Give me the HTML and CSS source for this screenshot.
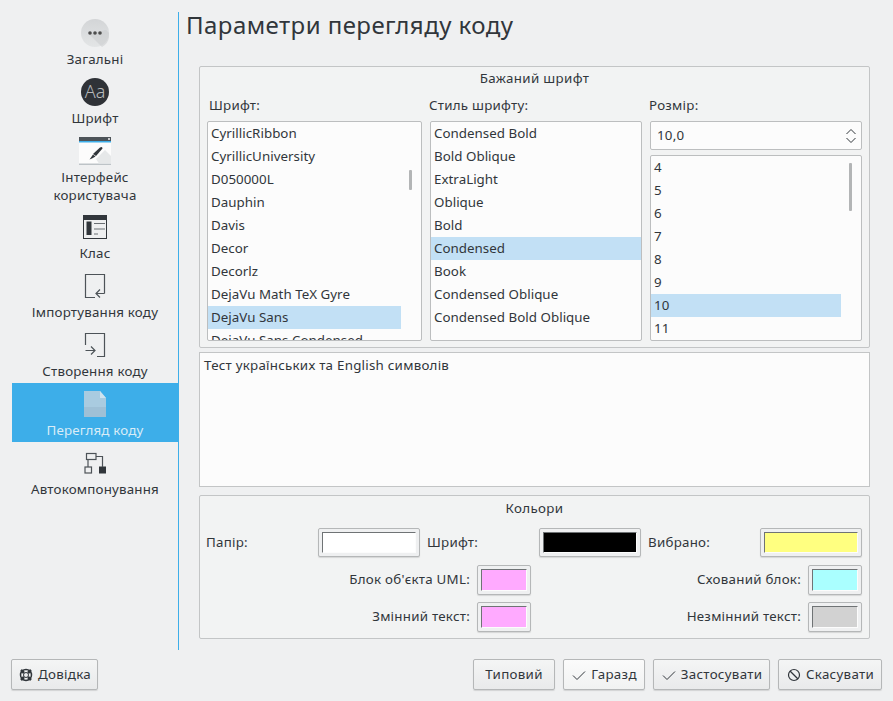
FILE: index.html
```html
<!DOCTYPE html>
<html lang="uk">
<head>
<meta charset="utf-8">
<title>Параметри перегляду коду</title>
<link rel="stylesheet" href="styles.css">
</head>
<body>
<div class="window">
  <div class="top">
    <nav class="sidebar">
      <div class="nav-item">
        <svg class="icon" width="28" height="28" viewBox="0 0 28 28"><defs><linearGradient id="g1" x1="0" y1="0" x2="0" y2="1"><stop offset="0" stop-color="#d3d5d7"/><stop offset="1" stop-color="#e3e5e6"/></linearGradient></defs><circle cx="14" cy="14" r="14" fill="url(#g1)"/><path d="M8 15l13 13a14 14 0 0 0 7-14l-3-3z" fill="#c8cacc" opacity=".5"/><circle cx="9" cy="14" r="1.800" fill="#4d4d4d"/><circle cx="14" cy="14" r="1.800" fill="#4d4d4d"/><circle cx="19" cy="14" r="1.800" fill="#4d4d4d"/></svg>
        <span>Загальні</span>
      </div>
      <div class="nav-item">
        <svg class="icon" width="28" height="28" viewBox="0 0 28 28"><circle cx="14" cy="14" r="14" fill="#2f3237"/><text x="14" y="20" text-anchor="middle" class="aa">Aa</text></svg>
        <span>Шрифт</span>
      </div>
      <div class="nav-item nav-tall">
        <svg class="icon" width="32" height="28" viewBox="0 0 32 28"><rect width="32" height="28" fill="#fcfcfc"/><rect width="32" height="4" fill="#4d5358"/><rect y="4" width="32" height="1.500" fill="#3daee9"/><rect x="29" y="1" width="2" height="2" fill="#c8cacc"/><rect y="26.500" width="32" height="1.500" fill="#bdc3c7"/><path d="M17 22l9-9 6 6v7.500H20z" fill="#e6e8e9"/><path d="M14 17l7-6.500q2.500-1.500 2.500 1L17 19z" fill="#31363b"/><path d="M14 17.500l2.500 2-3.500 2-2.500 1z" fill="#31363b"/></svg>
        <span>Інтерфейс<br>користувача</span>
      </div>
      <div class="nav-item">
        <svg class="icon" width="24" height="24" viewBox="0 0 24 24"><rect x=".5" y=".5" width="23" height="23" fill="#eff0f1" stroke="#31363b"/><rect width="24" height="5" fill="#31363b"/><rect x="3.500" y="6.500" width="5" height="13.500" fill="#31363b"/><path d="M11 8.500h11M11 14h11M11 19h4" stroke="#6b7074" fill="none"/></svg>
        <span>Клас</span>
      </div>
      <div class="nav-item">
        <svg class="icon" width="24" height="24" viewBox="0 0 24 24"><path d="M21.500 19.500V.5H2.500v23H12M21.500 19.500H13M17 15.500l-4 4 4 4" fill="none" stroke="#4d5358" stroke-width="1.200"/></svg>
        <span>Імпортування коду</span>
      </div>
      <div class="nav-item">
        <svg class="icon" width="24" height="24" viewBox="0 0 24 24"><path d="M2.500 12V.5h19v23H14M2.500 17.500H12M8 13.500l4 4-4 4" fill="none" stroke="#4d5358" stroke-width="1.200"/></svg>
        <span>Створення коду</span>
      </div>
      <div class="nav-item selected">
        <svg class="icon" width="24" height="28" viewBox="0 0 24 28"><path d="M1 1h16l6 7v19H1z" fill="#a9cbe0"/><path d="M1 17h22v10H1z" fill="#9fc0d6"/><path d="M17 1l6 7h-6z" fill="#cfe3ef"/></svg>
        <span>Перегляд коду</span>
      </div>
      <div class="nav-item">
        <svg class="icon" width="24" height="24" viewBox="0 0 24 24"><rect x="3.500" y="2.500" width="9.500" height="6" fill="none" stroke="#4d5358" stroke-width="1.200"/><rect x="2" y="16" width="6.500" height="6" fill="none" stroke="#4d5358" stroke-width="1.200"/><rect x="16" y="15.500" width="7" height="7" fill="#31363b"/><path d="M5 9v7M13 5.500h6.500V16" fill="none" stroke="#4d5358" stroke-width="1.200"/></svg>
        <span>Автокомпонування</span>
      </div>
    </nav>
    <main class="main">
      <h1 class="title">Параметри перегляду коду</h1>
      <section class="group font-group">
        <h2 class="group-title">Бажаний шрифт</h2>
        <div class="font-cols">
          <div class="col">
            <label class="col-label">Шрифт:</label>
            <div class="list list-family">
              <div class="row">CyrillicRibbon</div>
              <div class="row">CyrillicUniversity</div>
              <div class="row">D050000L</div>
              <div class="row">Dauphin</div>
              <div class="row">Davis</div>
              <div class="row">Decor</div>
              <div class="row">Decorlz</div>
              <div class="row">DejaVu Math TeX Gyre</div>
              <div class="row active">DejaVu Sans</div>
              <div class="row">DejaVu Sans Condensed</div>
              <i class="thumb thumb-family"></i>
            </div>
          </div>
          <div class="col">
            <label class="col-label shifted">Стиль шрифту:</label>
            <div class="list">
              <div class="row">Condensed Bold</div>
              <div class="row">Bold Oblique</div>
              <div class="row">ExtraLight</div>
              <div class="row">Oblique</div>
              <div class="row">Bold</div>
              <div class="row active">Condensed</div>
              <div class="row">Book</div>
              <div class="row">Condensed Oblique</div>
              <div class="row">Condensed Bold Oblique</div>
            </div>
          </div>
          <div class="col">
            <label class="col-label shifted">Розмір:</label>
            <div class="spin">
              <span>10,0</span>
              <svg width="10" height="14" viewBox="0 0 10 14"><path d="M.5 5L5 .5 9.500 5M.5 9L5 13.500 9.500 9" fill="none" stroke="#31363b"/></svg>
            </div>
            <div class="list list-size">
              <div class="row">4</div>
              <div class="row">5</div>
              <div class="row">6</div>
              <div class="row">7</div>
              <div class="row">8</div>
              <div class="row">9</div>
              <div class="row active">10</div>
              <div class="row">11</div>
              <i class="thumb thumb-size"></i>
            </div>
          </div>
        </div>
      </section>
      <div class="preview">Тест українських та English символів</div>
      <section class="group color-group">
        <h2 class="group-title">Кольори</h2>
        <div class="color-top">
          <span class="lbl">Папір:</span>
          <span class="swatch"><i class="c-white"></i></span>
          <span class="lbl">Шрифт:</span>
          <span class="swatch"><i class="c-black"></i></span>
          <span class="lbl">Вибрано:</span>
          <span class="swatch"><i class="c-yellow"></i></span>
        </div>
        <div class="color-rest">
          <span class="lbl right">Блок об'єкта UML:</span>
          <span class="swatch"><i class="c-pink"></i></span>
          <span class="lbl right">Схований блок:</span>
          <span class="swatch"><i class="c-cyan"></i></span>
          <span class="lbl right">Змінний текст:</span>
          <span class="swatch"><i class="c-pink"></i></span>
          <span class="lbl right">Незмінний текст:</span>
          <span class="swatch"><i class="c-grey"></i></span>
        </div>
      </section>
    </main>
  </div>
  <footer class="footer">
    <button class="btn btn-help">
      <svg width="16" height="16" viewBox="0 0 16 16"><circle cx="8" cy="8" r="5.500" fill="none" stroke="#31363b" stroke-width="1.500"/><circle cx="8" cy="8" r="2.500" fill="none" stroke="#31363b"/><path d="M3 3l3 3M13 3l-3 3M3 13l3-3M13 13l-3-3" stroke="#31363b" stroke-width="2.500"/></svg>
      <span>Довідка</span>
    </button>
    <span class="spacer"></span>
    <button class="btn btn-default"><span>Типовий</span></button>
    <button class="btn btn-ok">
      <svg width="16" height="16" viewBox="0 0 16 16"><path d="M2 8.500l4 4 8-8" fill="none" stroke="#31363b"/></svg>
      <span>Гаразд</span>
    </button>
    <button class="btn btn-apply">
      <svg width="16" height="16" viewBox="0 0 16 16"><path d="M2 8.500l4 4 8-8" fill="none" stroke="#31363b"/></svg>
      <span>Застосувати</span>
    </button>
    <button class="btn btn-cancel">
      <svg width="16" height="16" viewBox="0 0 16 16"><circle cx="8" cy="8" r="5.500" fill="none" stroke="#31363b" stroke-width="1.200"/><path d="M4 4l8 8" stroke="#31363b" stroke-width="1.200"/></svg>
      <span>Скасувати</span>
    </button>
  </footer>
</div>
</body>
</html>
```
FILE: styles.css
```css
* { box-sizing: border-box; }
html, body { margin: 0; padding: 0; }
body {
  width: 893px;
  height: 701px;
  overflow: hidden;
  background: #eff0f1;
  color: #31363b;
  font-family: "Noto Sans", sans-serif;
  font-size: 13.33px;
  line-height: 18px;
  letter-spacing: .25px;
}
.window { display: flex; flex-direction: column; height: 701px; }
.top { display: flex; height: 638px; margin-top: 12px; margin-left: 12px; }
.sidebar {
  width: 167px;
  border-right: 1px solid #3daee9;
  display: flex;
  flex-direction: column;
  letter-spacing: .2px;
}
.nav-item {
  height: 59px;
  padding-top: 7px;
  display: flex;
  flex-direction: column;
  align-items: center;
  text-align: center;
  flex: none;
}
.nav-item .icon { flex: none; height: 28px; margin-bottom: 3px; }
.nav-tall { height: 76px; }
.selected { background: #3daee9; color: #d9ecf7; }
.aa { font-family: "Noto Sans", sans-serif; font-size: 18px; font-weight: 300; fill: #b8babc; letter-spacing: 0; }
.main { flex: 1; min-width: 0; padding-left: 7px; display: flex; flex-direction: column; }
.title {
  margin: 0;
  height: 54px;
  font-size: 24px;
  line-height: 26px;
  font-weight: 400;
  letter-spacing: .45px;
}
.group {
  margin-left: 13px;
  width: 671px;
  background: #f2f3f3;
  border: 1px solid #c3c5c6;
  border-radius: 2px;
}
.group-title {
  margin: 0;
  font-size: 13.33px;
  font-weight: 400;
  line-height: 18px;
  text-align: center;
  letter-spacing: .35px;
}
.font-group { height: 282px; padding: 2px 7px 0; }
.font-cols { display: grid; grid-template-columns: 215px 212px 212px; column-gap: 8px; margin-top: 9px; }
.col { display: flex; flex-direction: column; }
.col-label { height: 25px; padding-left: 2px; line-height: 18px; }
.col-label.shifted { padding-left: 0; margin-left: -1px; }
.list {
  position: relative;
  height: 220px;
  background: #fcfcfc;
  border: 1px solid #bcbebf;
  border-radius: 2px;
  overflow: hidden;
}
.row { height: 23px; line-height: 22px; padding-left: 3px; white-space: nowrap; letter-spacing: .03px; }
.row.active { background: #c2e0f5; }
.list-family .row.active { margin-right: 20px; }
.list-size .row.active { margin-right: 20px; }
.thumb { position: absolute; width: 3px; background: #b3b5b6; border-radius: 1px; }
.thumb-family { left: 201px; top: 48px; height: 20px; }
.thumb-size { left: 198px; top: 7px; height: 48px; }
.spin {
  height: 29px;
  margin-bottom: 5px;
  background: #fcfcfc;
  border: 1px solid #bcbebf;
  border-radius: 2px;
  display: flex;
  align-items: center;
  justify-content: space-between;
  padding: 0 5px 2px 6px;
}
.spin svg { margin-top: 2px; }
.list-size { height: 186px; }
.preview {
  margin: 4px 0 0 13px;
  width: 671px;
  height: 135px;
  background: #fcfcfc;
  border: 1px solid #c3c5c6;
  padding: 3px 4px;
}
.color-group { height: 144px; margin-top: 8px; padding: 3px 6px 0; }
.color-top {
  display: grid;
  grid-template-columns: 112px 102px 119px 102px 119px 102px;
  margin-top: 11px;
  align-items: center;
}
.color-top .lbl:nth-of-type(n+3) { margin-left: 7px; }
.color-rest {
  display: grid;
  grid-template-columns: 264px 54px 263px 54px;
  column-gap: 7px;
  row-gap: 7px;
  margin-top: 8px;
  align-items: center;
}
.color-rest .swatch { height: 30px; }
.lbl { padding-bottom: 2px; }
.lbl.right { text-align: right; }
.swatch {
  display: block;
  height: 29px;
  padding: 3px 3px 3px 3px;
  background: #eff0f1;
  border: 1px solid #b5b7b8;
  border-radius: 2px;
  box-shadow: 0 1px 1px rgba(0,0,0,.12);
}
.color-top .swatch { padding-right: 3px; }
.swatch i {
  display: block;
  height: 100%;
  border-top: 1px solid #6f7375;
  border-left: 1px solid #6f7375;
  border-right: 1px solid #fcfcfc;
  border-bottom: 1px solid #fcfcfc;
}
.c-white { background: #fff; }
.c-black { background: #000; }
.c-yellow { background: #ffff80; }
.c-pink { background: #ffaaff; }
.c-cyan { background: #aaffff; }
.c-grey { background: #d2d2d2; }
.footer {
  display: flex;
  align-items: flex-start;
  padding: 9px 11px 0 11px;
  gap: 8px;
}
.spacer { flex: 1; }
.btn {
  height: 31px;
  display: flex;
  align-items: center;
  justify-content: center;
  gap: 4px;
  padding: 0;
  font: inherit;
  letter-spacing: .3px;
  color: inherit;
  background: linear-gradient(#f4f5f5, #e9eaeb);
  border: 1px solid #b5b7b8;
  border-radius: 2px;
  box-shadow: 0 1px 1px rgba(0,0,0,.12);
}
.btn span { padding-bottom: 2px; }
.btn-help { width: 87px; }
.btn-default { width: 82px; }
.btn-ok { width: 82px; background: linear-gradient(#fbfbfb, #f1f2f2); }
.btn-apply { width: 117px; }
.btn-cancel { width: 104px; }
```
